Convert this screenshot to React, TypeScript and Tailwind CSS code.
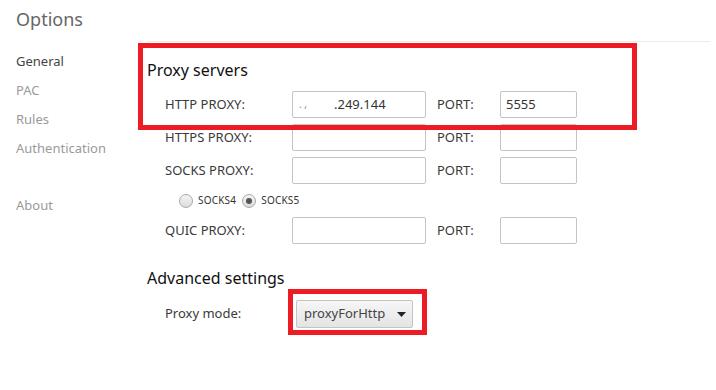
const font = { fontFamily: '"Noto Sans", "Open Sans", sans-serif' };

function Field({ value, width }: { value?: React.ReactNode; width: string }) {
  return (
    <div
      className={`${width} h-[27px] flex items-center px-[5px] border border-[#c4c4c4] rounded-[2px] bg-white text-[13px] text-[#333]`}
    >
      {value}
    </div>
  );
}

function ProxyRow({
  label,
  value,
  port,
}: {
  label: string;
  value?: React.ReactNode;
  port?: string;
}) {
  return (
    <div className="flex items-center h-[27px] pl-[18px]">
      <div className="w-[127px] text-[13px] text-[#3a3a3a]">{label}</div>
      <Field value={value} width="w-[134px]" />
      <div className="w-[74px] pl-[11px] text-[13px] text-[#3a3a3a]">PORT:</div>
      <Field value={port} width="w-[77px]" />
    </div>
  );
}

function Radio({ checked, label }: { checked?: boolean; label: string }) {
  return (
    <div className="flex items-center gap-[5px]">
      <span className="w-[14px] h-[14px] rounded-full border border-[#a9a9a9] bg-gradient-to-b from-[#f4f4f4] to-[#dcdcdc] flex items-center justify-center">
        {checked && <span className="w-[6px] h-[6px] rounded-full bg-[#555]" />}
      </span>
      <span className="text-[10px] text-[#333] tracking-[0.2px]">{label}</span>
    </div>
  );
}

export default function App() {
  const nav = ["General", "PAC", "Rules", "Authentication"];
  return (
    <div className="relative w-[716px] h-[390px] bg-white overflow-hidden" style={font}>
      <div className="flex">
        <aside className="w-[147px] shrink-0 pl-[16px] pt-[7px]">
          <h1 className="text-[18px] leading-[24px] text-[#666]">Options</h1>
          <nav className="mt-[16px] text-[13px] leading-[29px]">
            {nav.map((item, i) => (
              <div key={item} className={i === 0 ? "text-[#444]" : "text-[#9a9a9a]"}>
                {item}
              </div>
            ))}
            <div className="mt-[28px] text-[#9a9a9a]">About</div>
          </nav>
        </aside>

        <main className="flex-1 mt-[41px] mr-[6px] border-t border-[#ebebeb]">
          <h2 className="pt-[18px] text-[16px] leading-[20px] text-[#111]">Proxy servers</h2>
          <div className="mt-[11px] flex flex-col gap-[6px]">
            <ProxyRow
              label="HTTP PROXY:"
              value={
                <span className="flex items-center">
                  <span className="text-[#888] text-[10px] w-[36px] pl-[1px]">. ,</span>
                  <span className="text-[#333]">.249.144</span>
                </span>
              }
              port="5555"
            />
            <ProxyRow label="HTTPS PROXY:" />
            <ProxyRow label="SOCKS PROXY:" />
            <div className="h-[21px] flex items-center gap-[6px] pl-[32px]">
              <Radio label="SOCKS4" />
              <Radio checked label="SOCKS5" />
            </div>
            <ProxyRow label="QUIC PROXY:" />
          </div>

          <h2 className="mt-[24px] text-[16px] leading-[20px] text-[#111]">Advanced settings</h2>
          <div className="mt-[12px] flex items-center pl-[18px]">
            <div className="w-[131px] text-[13px] text-[#3a3a3a]">Proxy mode:</div>
            <div className="w-[117px] h-[28px] flex items-center justify-between pl-[7px] pr-[6px] border border-[#c4c4c4] rounded-[2px] bg-gradient-to-b from-[#f6f6f6] to-[#e4e4e4] text-[13px] text-[#444]">
              <span>proxyForHttp</span>
              <svg width="9" height="5" viewBox="0 0 9 5">
                <path d="M0 0h9L4.5 5z" fill="#222" />
              </svg>
            </div>
          </div>
        </main>
      </div>

      <div className="absolute left-[138px] top-[43px] w-[499px] h-[87px] border-[5px] border-[#ed1c24] pointer-events-none" />
      <div className="absolute left-[288px] top-[289px] w-[139px] h-[46px] border-[5px] border-[#ed1c24] pointer-events-none" />
    </div>
  );
}
